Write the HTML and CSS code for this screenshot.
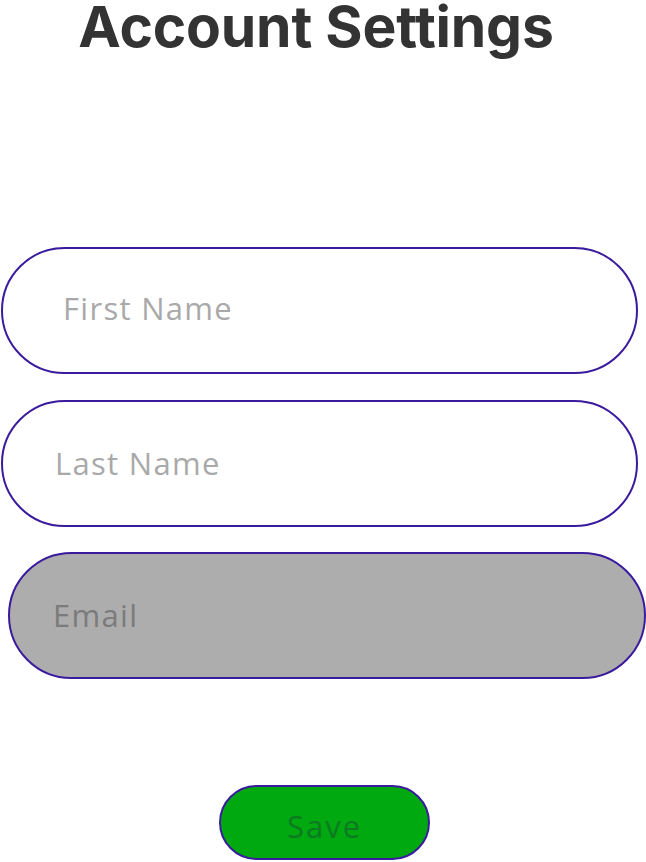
FILE: index.html
```html
<!DOCTYPE html>
<html lang="en">
<head>
<meta charset="utf-8">
<title>Account Settings</title>
<link rel="stylesheet" href="styles.css">
</head>
<body>
<main class="page">
  <h1 class="title">Account Settings</h1>
  <form class="form">
    <input class="field field-first" type="text" placeholder="First Name">
    <input class="field field-last" type="text" placeholder="Last Name">
    <input class="field field-email" type="email" placeholder="Email" disabled>
    <button class="save" type="button">Save</button>
  </form>
</main>
</body>
</html>
```

FILE: styles.css
```css
html, body {
  margin: 0;
  padding: 0;
  background: #ffffff;
}

.page {
  width: 646px;
  display: flex;
  flex-direction: column;
}

.title {
  margin: 0;
  padding-right: 14px;
  font-family: "Inter", "Liberation Sans", sans-serif;
  font-weight: 700;
  font-size: 57px;
  line-height: 54px;
  color: #333333;
  text-align: center;
  letter-spacing: -0.2px;
}

.form {
  display: flex;
  flex-direction: column;
  align-items: flex-start;
  margin-top: 193px;
  padding-left: 1px;
}

.field {
  box-sizing: border-box;
  width: 637px;
  height: 127px;
  border: 2px solid #3b1b9d;
  border-radius: 64px;
  background: #ffffff;
  font-family: "Open Sans", "Liberation Sans", sans-serif;
  font-size: 31px;
  letter-spacing: 1.3px;
  color: #444444;
  outline: none;
  margin: 0;
  padding-bottom: 6px;
}

.field::placeholder {
  color: #a9a9a9;
  opacity: 1;
}

.field-first {
  padding-left: 60px;
}

.field-last {
  margin-top: 26px;
  padding-left: 52px;
  padding-bottom: 2px;
}

.field-email {
  margin-top: 25px;
  margin-left: 7px;
  padding-left: 43px;
  padding-bottom: 2px;
  width: 638px;
  background: #adadad;
}

.field-email::placeholder {
  color: #7b7b7b;
}

.save {
  box-sizing: border-box;
  align-self: flex-start;
  margin-top: 106px;
  margin-left: 218px;
  width: 211px;
  height: 75px;
  border: 2px solid #3b1b9d;
  border-radius: 38px;
  background: #00a90f;
  font-family: "Open Sans", "Liberation Sans", sans-serif;
  font-size: 31px;
  letter-spacing: 2px;
  color: #0d7a22;
  padding: 6px 0 0 0;
}
```
